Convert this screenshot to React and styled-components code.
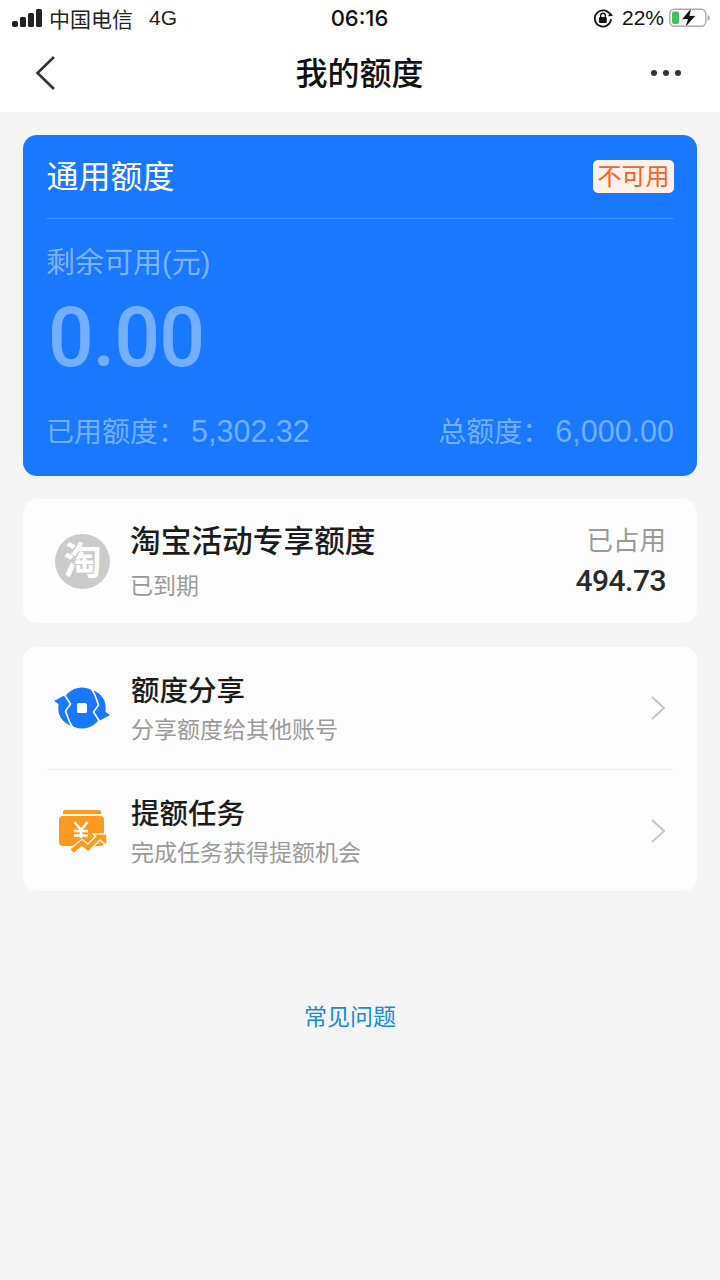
import React from "react";
import styled, { createGlobalStyle } from "styled-components";

const GlobalStyle = createGlobalStyle`
  html, body {
    margin: 0;
    padding: 0;
    background: #f4f4f4;
    font-family: "Liberation Sans", "Noto Sans CJK SC", sans-serif;
  }
  * { box-sizing: border-box; }
`;

const Page = styled.div`
  width: 720px;
  height: 1280px;
  background: #f4f4f4;
  overflow: hidden;
`;

const Header = styled.div`
  height: 112px;
  background: #fff;
  display: flex;
  flex-direction: column;
`;

const StatusBar = styled.div`
  height: 36px;
  display: grid;
  grid-template-columns: 1fr auto 1fr;
  align-items: center;
  padding: 0 9px 0 12px;
  color: #111;
`;

const StatusLeft = styled.div`
  display: flex;
  align-items: center;
  font-size: 21px;
  color: #222;
`;

const Carrier = styled.span`
  margin-left: 6px;
`;

const Network = styled.span`
  margin-left: 16px;
`;

const Clock = styled.div`
  font-size: 22px;
  font-weight: 500;
  font-family: "Inter", sans-serif;
  margin-left: -4px;
`;

const StatusRight = styled.div`
  display: flex;
  align-items: center;
  justify-content: flex-end;
  font-size: 21px;
`;

const Percent = styled.span`
  margin: 0 5px 0 9px;
`;

const NavBar = styled.div`
  height: 76px;
  display: grid;
  grid-template-columns: 1fr auto 1fr;
  align-items: center;
  padding: 0 38px 2px 34px;
`;

const NavTitle = styled.div`
  margin: 2px 0 0 3px;
  font-size: 32px;
  font-weight: 500;
  color: #111;
  line-height: 1;
`;

const NavEnd = styled.div`
  display: flex;
  justify-content: flex-end;
`;

const Content = styled.div`
  padding: 23px 23px 0;
  display: flex;
  flex-direction: column;
  gap: 23px;
`;

const QuotaCard = styled.div`
  height: 341px;
  background: #1a78ff;
  border-radius: 14px;
  padding: 0 23px;
  display: flex;
  flex-direction: column;
`;

const QuotaHeader = styled.div`
  height: 84px;
  display: flex;
  align-items: center;
  justify-content: space-between;
  border-bottom: 1px solid rgba(255, 255, 255, 0.16);
`;

const QuotaTitle = styled.div`
  margin-left: 0.5px;
  font-size: 32px;
  color: #fff;
  line-height: 1;
`;

const Badge = styled.div`
  width: 81px;
  height: 33px;
  margin-top: -1px;
  background: #fff0e8;
  border-radius: 5px;
  color: #f2642c;
  font-size: 24px;
  line-height: 33px;
  text-align: center;
`;

const RemainLabel = styled.div`
  margin-top: 26px;
  font-size: 29px;
  line-height: 36px;
  color: #7fb2ff;
`;

const Amount = styled.div`
  margin-top: 12px;
  margin-left: 2px;
  font-family: "Roboto", sans-serif;
  font-size: 84px;
  font-weight: 500;
  line-height: 90px;
  letter-spacing: -1px;
  color: #74aeff;
  transform: scaleX(0.96);
  transform-origin: left center;
`;

const QuotaFooter = styled.div`
  margin-top: 30px;
  display: flex;
  justify-content: space-between;
  align-items: baseline;
  line-height: 36px;
  color: #74aeff;
`;

const FooterLabel = styled.span`
  font-size: 28px;
`;

const FooterValue = styled.span`
  margin-left: 5px;
  font-size: 30.5px;
`;

const Card = styled.div`
  background: #fdfdfd;
  border-radius: 14px;
`;

const TaobaoCard = styled(Card)`
  height: 124px;
  padding: 0 31px 0 32px;
  display: flex;
  align-items: center;
`;

const TaobaoLogo = styled.div`
  width: 55px;
  height: 55px;
  flex: none;
  border-radius: 50%;
  background: #cbcbcb;
  color: #fff;
  font-size: 38px;
  font-weight: 700;
  line-height: 55px;
  text-align: center;
`;

const TaobaoText = styled.div`
  flex: 1;
  margin-left: 20px;
  padding-top: 1px;
`;

const TaobaoTitle = styled.div`
  font-size: 30.7px;
  font-weight: 500;
  line-height: 40px;
  color: #1c1c1c;
`;

const MutedText = styled.div`
  margin-top: 8px;
  font-size: 23px;
  line-height: 32px;
  color: #9a9a9a;
`;

const Occupied = styled.div`
  text-align: right;
`;

const OccupiedLabel = styled.div`
  font-size: 26.5px;
  line-height: 36px;
  color: #9a9a9a;
`;

const OccupiedValue = styled.div`
  margin-top: 4px;
  font-family: "Roboto", sans-serif;
  font-size: 30px;
  font-weight: 500;
  line-height: 36px;
  letter-spacing: -0.5px;
  color: #2a2a2a;
`;

const ListCard = styled(Card)`
  height: 244px;
  margin-top: 1px;
  padding: 0 23px;
`;

const Row = styled.div`
  height: 122px;
  display: flex;
  align-items: center;
  border-top: ${({ $divided }) => ($divided ? "1px solid #f0f0f0" : "none")};
`;

const RowIcon = styled.div`
  width: 58px;
  margin-left: 8px;
  flex: none;
  display: flex;
  justify-content: center;
`;

const RowText = styled.div`
  flex: 1;
  margin-left: 19px;
  padding-top: 2px;
`;

const RowTitle = styled.div`
  font-size: 28.5px;
  font-weight: 500;
  line-height: 36px;
  color: #1c1c1c;
`;

const RowSub = styled.div`
  margin-top: 6px;
  font-size: 23px;
  line-height: 30px;
  color: #9a9a9a;
`;

const Chevron = styled.svg`
  margin-right: 8px;
  flex: none;
`;

const HelpLink = styled.div`
  margin-top: 110px;
  padding-right: 20px;
  text-align: center;
  font-size: 23px;
  line-height: 32px;
  color: #1a8ad8;
`;

const SignalIcon = () => (
  <svg width="31" height="19" viewBox="0 0 31 19">
    <rect x="0" y="12" width="6" height="6" rx="2" fill="#222" />
    <rect x="8" y="8" width="6" height="10" rx="1.5" fill="#222" />
    <rect x="16" y="4" width="6" height="14" rx="1.5" fill="#222" />
    <rect x="24" y="0" width="6" height="18" rx="1.5" fill="#222" />
  </svg>
);

const RotationLockIcon = () => (
  <svg width="20" height="20" viewBox="0 0 18 18">
    <path d="M15.6 6.4A7.3 7.3 0 1 0 16.2 10" fill="none" stroke="#111" strokeWidth="1.6" />
    <path d="M17.8 7.2l-4.4.2 2.6-3.4z" fill="#111" />
    <rect x="5.4" y="8" width="7" height="5.6" rx="1" fill="#111" />
    <path d="M6.9 8.4V6.8a2.1 2.1 0 0 1 4.2 0v1.6" fill="none" stroke="#111" strokeWidth="1.2" />
  </svg>
);

const BatteryIcon = () => (
  <svg width="42" height="22" viewBox="0 0 42 22">
    <rect x="0.8" y="2.2" width="36" height="17" rx="4.5" fill="none" stroke="#a9a9a9" strokeWidth="1.4" />
    <rect x="3" y="4.5" width="7" height="12.5" rx="2" fill="#3fc25f" />
    <path d="M38.5 8.2c1.6.4 2.3 1.4 2.3 2.7s-.7 2.3-2.3 2.7z" fill="#a9a9a9" />
    <path d="M23 0L12.5 12.5H18.5L15.5 21.5 27 8.5H20.8L23 0Z" fill="#111" stroke="#fff" strokeWidth="0.8" />
  </svg>
);

const BackIcon = () => (
  <svg width="22" height="36" viewBox="0 0 22 36">
    <path d="M20 2L3.5 18 20 34" fill="none" stroke="#333" strokeWidth="2.6" />
  </svg>
);

const MoreIcon = () => (
  <svg width="32" height="8" viewBox="0 0 32 8">
    <circle cx="4" cy="4" r="3" fill="#333" />
    <circle cx="16" cy="4" r="3" fill="#333" />
    <circle cx="28" cy="4" r="3" fill="#333" />
  </svg>
);

const SHARE_ARROW = "M0 16L11 10 16.5 19 12 23 11.5 27 15 36 18 41C8 38 3 30 4.5 19Z";
const SHARE_GAP = "M10 9L16.5 19 11.5 26 15.5 37 19 43";

const ShareIcon = () => (
  <svg width="58" height="46" viewBox="0 0 58 46">
    <circle cx="28" cy="23" r="20.5" fill="#1a78ff" />
    <path d={SHARE_ARROW} fill="#1a78ff" />
    <path d={SHARE_GAP} fill="none" stroke="#fdfdfd" strokeWidth="1.6" />
    <g transform="rotate(180 28 23)">
      <path d={SHARE_ARROW} fill="#1a78ff" />
      <path d={SHARE_GAP} fill="none" stroke="#fdfdfd" strokeWidth="1.6" />
    </g>
    <rect x="23" y="18" width="10" height="10" rx="1.5" fill="#fdfdfd" />
  </svg>
);

const RaiseIcon = () => (
  <svg width="52" height="48" viewBox="0 0 52 48">
    <path d="M6 7V5C6 3.9 6.9 3 8 3H42C43.1 3 44 3.9 44 5V7Z" fill="#ff9a1f" />
    <rect x="2" y="9" width="45" height="30" rx="4" fill="#ff9a1f" />
    <path d="M17.5 15L24 23 30.5 15M17 24H31M17 28.5H31M24 23V31" fill="none" stroke="#fdfdfd" strokeWidth="2.6" />
    <path d="M15 44L25 36 31 41 41 31" fill="none" stroke="#fdfdfd" strokeWidth="7" />
    <path d="M36 27H50V39Z" fill="#ff9a1f" stroke="#fdfdfd" strokeWidth="1.5" />
    <path d="M15 44L25 36 31 41 43 29" fill="none" stroke="#ff9a1f" strokeWidth="4.5" />
  </svg>
);

const ChevronIcon = () => (
  <Chevron width="16" height="26" viewBox="0 0 16 26">
    <path d="M2 2L14 13 2 24" fill="none" stroke="#c4c4c4" strokeWidth="2" />
  </Chevron>
);

const rows = [
  { title: "额度分享", sub: "分享额度给其他账号", icon: <ShareIcon /> },
  { title: "提额任务", sub: "完成任务获得提额机会", icon: <RaiseIcon /> },
];

const App = () => (
  <Page>
    <GlobalStyle />
    <Header>
      <StatusBar>
        <StatusLeft>
          <SignalIcon />
          <Carrier>中国电信</Carrier>
          <Network>4G</Network>
        </StatusLeft>
        <Clock>06:16</Clock>
        <StatusRight>
          <RotationLockIcon />
          <Percent>22%</Percent>
          <BatteryIcon />
        </StatusRight>
      </StatusBar>
      <NavBar>
        <BackIcon />
        <NavTitle>我的额度</NavTitle>
        <NavEnd>
          <MoreIcon />
        </NavEnd>
      </NavBar>
    </Header>
    <Content>
      <QuotaCard>
        <QuotaHeader>
          <QuotaTitle>通用额度</QuotaTitle>
          <Badge>不可用</Badge>
        </QuotaHeader>
        <RemainLabel>剩余可用(元)</RemainLabel>
        <Amount>0.00</Amount>
        <QuotaFooter>
          <span>
            <FooterLabel>已用额度：</FooterLabel>
            <FooterValue>5,302.32</FooterValue>
          </span>
          <span>
            <FooterLabel>总额度：</FooterLabel>
            <FooterValue>6,000.00</FooterValue>
          </span>
        </QuotaFooter>
      </QuotaCard>
      <TaobaoCard>
        <TaobaoLogo>淘</TaobaoLogo>
        <TaobaoText>
          <TaobaoTitle>淘宝活动专享额度</TaobaoTitle>
          <MutedText>已到期</MutedText>
        </TaobaoText>
        <Occupied>
          <OccupiedLabel>已占用</OccupiedLabel>
          <OccupiedValue>494.73</OccupiedValue>
        </Occupied>
      </TaobaoCard>
      <ListCard>
        {rows.map((row, i) => (
          <Row key={row.title} $divided={i > 0}>
            <RowIcon>{row.icon}</RowIcon>
            <RowText>
              <RowTitle>{row.title}</RowTitle>
              <RowSub>{row.sub}</RowSub>
            </RowText>
            <ChevronIcon />
          </Row>
        ))}
      </ListCard>
    </Content>
    <HelpLink>常见问题</HelpLink>
  </Page>
);

export default App;
